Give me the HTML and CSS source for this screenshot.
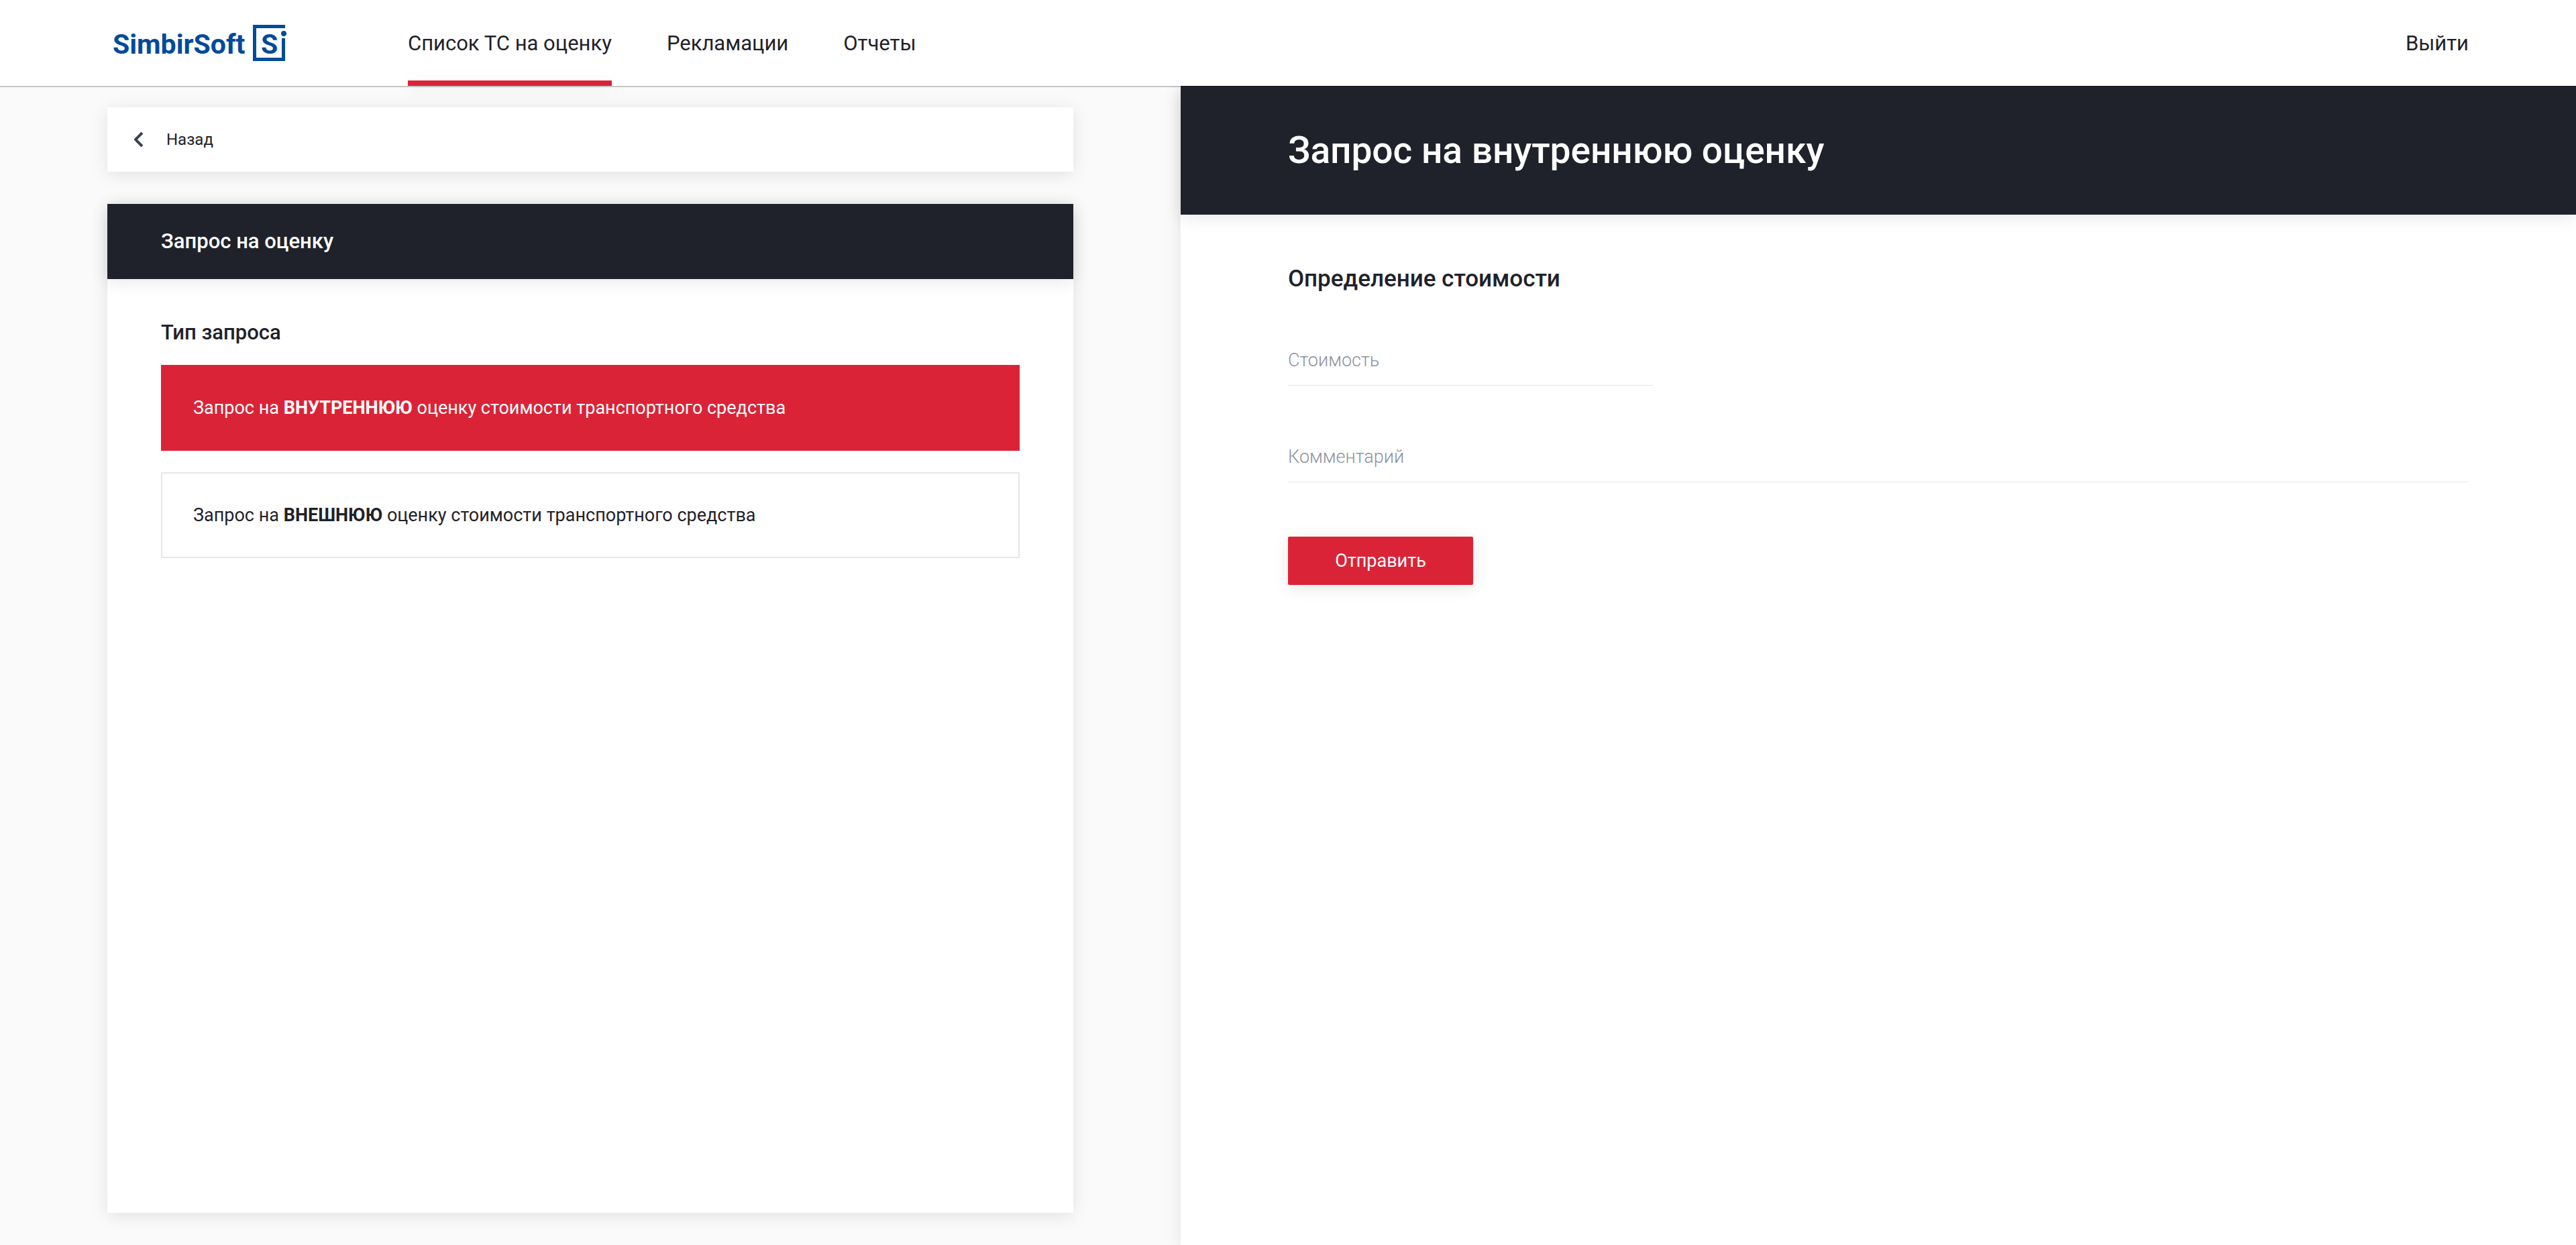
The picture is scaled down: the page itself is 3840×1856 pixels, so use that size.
FILE: index.html
```html
<!DOCTYPE html>
<html lang="ru">
<head>
  <meta charset="utf-8">
  <meta name="viewport" content="width=device-width, initial-scale=1">
  <title>Запрос на оценку</title>
  <link rel="stylesheet" href="styles.css">
</head>
<body>
  <div class="page">
    <header class="topbar">
      <a class="logo" href="#" aria-label="SimbirSoft">
        <svg class="logo-image" width="260" height="56" viewBox="0 0 260 56" fill="currentColor">
          <text class="logo-text" x="0" y="44">SimbirSoft</text>
          <path d="M257 1H209V55H257V21H252V50H214V6H257Z"/>
          <circle cx="255" cy="14" r="4"/>
          <text class="logo-text" x="221" y="44">S</text>
        </svg>
      </a>
      <nav class="nav">
        <a class="nav-link nav-link-active" href="#" aria-current="page">Список ТС на оценку</a>
        <a class="nav-link" href="#">Рекламации</a>
        <a class="nav-link" href="#">Отчеты</a>
      </nav>
      <a class="nav-link logout" href="#">Выйти</a>
    </header>

    <main class="columns">
      <section class="side">
        <a class="back" href="#">
          <svg class="back-icon" width="14" height="24" viewBox="0 0 14 24" fill="none" stroke="currentColor" stroke-width="4">
            <path d="M12 2L2 12L12 22"/>
          </svg>
          Назад
        </a>
        <div class="card">
          <h2 class="card-header">Запрос на оценку</h2>
          <div class="card-body">
            <h3 class="group-title">Тип запроса</h3>
            <div class="options">
              <button class="option option-active" type="button" aria-pressed="true">Запрос на <b>ВНУТРЕННЮЮ</b> оценку стоимости транспортного средства</button>
              <button class="option" type="button" aria-pressed="false">Запрос на <b>ВНЕШНЮЮ</b> оценку стоимости транспортного средства</button>
            </div>
          </div>
        </div>
      </section>

      <section class="panel">
        <h1 class="panel-header">Запрос на внутреннюю оценку</h1>
        <form class="form">
          <h2 class="form-title">Определение стоимости</h2>
          <input class="field field-short" type="text" placeholder="Стоимость" aria-label="Стоимость">
          <input class="field" type="text" placeholder="Комментарий" aria-label="Комментарий">
          <button class="submit" type="submit">Отправить</button>
        </form>
      </section>
    </main>
  </div>
</body>
</html>
```
FILE: styles.css
```css
:root {
  --dark: #1f222a;
  --red: #db2337;
  --line: #e6e6e6;
  --shadow: 0 4px 24px rgba(0, 0, 0, 0.1);
}

* {
  box-sizing: border-box;
}

body {
  margin: 0;
  background: #fafafa;
  color: var(--dark);
  font-family: Roboto, "Liberation Sans", sans-serif;
}

h1,
h2,
h3 {
  margin: 0;
  font-weight: 500;
}

a {
  color: inherit;
  text-decoration: none;
}

input,
button {
  font-family: inherit;
}

.page {
  display: flex;
  flex-direction: column;
  min-height: 100vh;
}

/* Top bar */
.topbar {
  display: flex;
  align-items: center;
  height: 128px;
  padding: 0 160px 0 168px;
  background: #fff;
  box-shadow: 0 2px 0 rgba(0, 0, 0, 0.2);
  position: relative;
  z-index: 1;
}

.logo {
  display: flex;
  width: 440px;
  color: #004a9c;
}

.logo-image {
  overflow: visible;
}

.logo-text {
  font: bold 41px Roboto, sans-serif;
}

.nav {
  display: flex;
  align-self: stretch;
  gap: 82px;
}

.nav-link {
  display: flex;
  align-items: center;
  font-size: 31px;
  position: relative;
}

.nav-link-active::after {
  content: "";
  position: absolute;
  left: 0;
  right: 0;
  bottom: 0;
  height: 8px;
  background: var(--red);
  box-shadow: 0 4px 24px rgba(0, 0, 0, 0.08);
}

.logout {
  margin-left: auto;
}

/* Columns */
.columns {
  display: grid;
  grid-template-columns: 11fr 13fr;
  flex: 1;
}

.side {
  display: flex;
  flex-direction: column;
  gap: 48px;
  padding: 32px 160px 48px;
}

.back {
  display: flex;
  align-items: center;
  gap: 34px;
  height: 96px;
  padding: 0 40px;
  background: #fff;
  font-size: 24px;
  box-shadow: var(--shadow);
}

.back-icon {
  color: #3b4256;
}

.card {
  flex: 1;
  background: #fff;
  box-shadow: var(--shadow);
}

.card-header {
  padding: 0 80px;
  background: var(--dark);
  color: #fff;
  font-size: 31px;
  line-height: 112px;
  box-shadow: var(--shadow);
}

.card-body {
  padding: 64px 80px;
}

.group-title {
  font-size: 31px;
  line-height: 32px;
}

.options {
  display: flex;
  flex-direction: column;
  gap: 32px;
  margin-top: 32px;
}

.option {
  min-height: 128px;
  padding: 0 46px;
  background: #fff;
  border: 2px solid var(--line);
  color: var(--dark);
  font-size: 27px;
  text-align: left;
}

.option-active {
  background: var(--red);
  border-color: var(--red);
  color: #fff;
}

/* Request panel */
.panel {
  background: #fff;
  box-shadow: var(--shadow);
}

.panel-header {
  padding: 0 160px;
  background: var(--dark);
  color: #fff;
  font-size: 55px;
  line-height: 192px;
  box-shadow: var(--shadow);
}

.form {
  display: flex;
  flex-direction: column;
  align-items: flex-start;
  padding: 80px 160px;
}

.form-title {
  margin-bottom: 68px;
  font-size: 35px;
  line-height: 32px;
}

.field {
  width: 100%;
  height: 75px;
  margin-bottom: 69px;
  padding: 0;
  background: none;
  border: 0;
  border-bottom: 1px solid var(--line);
  color: var(--dark);
  font-size: 27px;
}

.field::placeholder {
  color: #8c929c;
  font-weight: 300;
  opacity: 1;
}

.field-short {
  width: 544px;
}

.submit {
  min-width: 276px;
  height: 72px;
  margin-top: 12px;
  background: var(--red);
  border: 0;
  border-radius: 2px;
  color: #fff;
  font-size: 27px;
  box-shadow: 0 4px 24px rgba(0, 0, 0, 0.1);
}
```
